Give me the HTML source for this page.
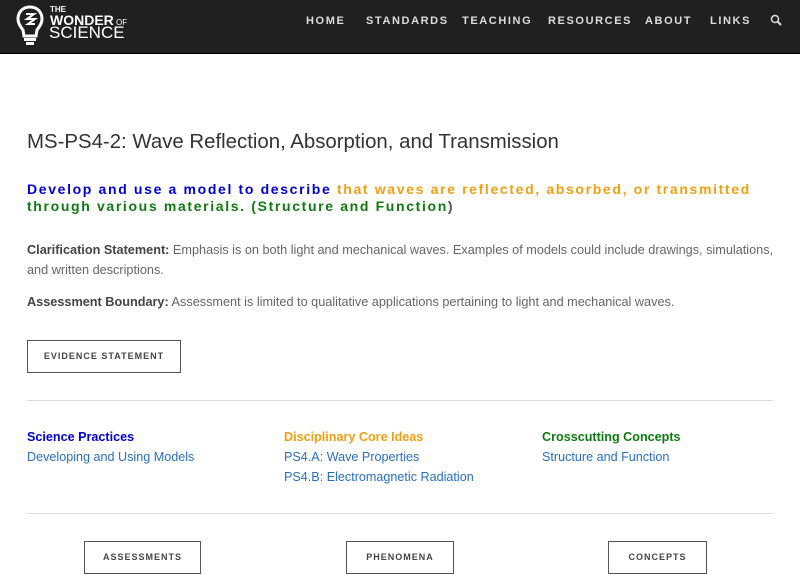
<!DOCTYPE html>
<html><head><meta charset="utf-8"><style>
*{margin:0;padding:0;box-sizing:border-box}
body{width:800px;height:575px;overflow:hidden;background:#fff;font-family:"Liberation Sans",sans-serif;color:#555;position:relative}
.hdr{position:absolute;left:0;top:0;width:800px;height:54px;background:#202020;border-bottom:1px solid #000}
.nav{position:absolute;top:15px;font-size:11px;font-weight:bold;letter-spacing:1.6px;color:#ddd}
.abs{position:absolute;white-space:nowrap}
h1{position:absolute;left:27px;top:131px;font-size:20.4px;font-weight:normal;color:#333}
.sub{position:absolute;left:27px;top:181px;font-size:14px;font-weight:bold;letter-spacing:1.65px;line-height:17px;white-space:nowrap}
.b{color:#0000d8}.o{color:#f0a010}.g{color:#107a10}
.p{position:absolute;left:27px;font-size:12.7px;line-height:20px;color:#666;width:750px}
.p b{color:#444}
.btn{position:absolute;border:1.5px solid #555;font-size:9px;font-weight:bold;letter-spacing:1px;color:#444;text-align:center;height:33px;line-height:30px}
hr{position:absolute;left:27px;width:746px;border:0;border-top:1px solid #ddd}
.h{position:absolute;font-size:12.6px;font-weight:bold}
.l{position:absolute;font-size:12.6px;color:#2a6fc0}
</style></head><body>
<div class="hdr">
<svg style="position:absolute;left:15px;top:4px" width="30" height="44" viewBox="0 0 30 44"><path d="M15 3C7 3 3 9 3 15c0 5 3 8 5 11l1 6h12l1-6c2-3 5-6 5-11 0-6-4-12-12-12z" fill="none" stroke="#fff" stroke-width="3"/><path d="M11 10h8l-7 5h8l-7 5h7" fill="none" stroke="#fff" stroke-width="2"/><rect x="9" y="34" width="12" height="3" fill="#fff"/><rect x="11" y="38" width="8" height="3" fill="#fff"/></svg>
<div class="abs" style="left:50px;top:5px;font-size:8px;font-weight:bold;color:#fff">THE</div>
<div class="abs" style="left:50px;top:12px;font-size:14px;font-weight:bold;color:#fff">WONDER<span style="font-size:8px;font-weight:normal"> OF</span></div>
<div class="abs" style="left:49px;top:23px;font-size:17px;color:#fff">SCIENCE</div>
<div class="nav" style="left:306px">HOME</div>
<div class="nav" style="left:366px">STANDARDS</div>
<div class="nav" style="left:462px">TEACHING</div>
<div class="nav" style="left:548px">RESOURCES</div>
<div class="nav" style="left:645px">ABOUT</div>
<div class="nav" style="left:710px">LINKS</div>
<svg style="position:absolute;left:770px;top:14px" width="12" height="12"><circle cx="5" cy="5" r="3.5" fill="none" stroke="#ddd" stroke-width="1.5"/><path d="M7.5 7.5L11 11" stroke="#ddd" stroke-width="2"/></svg>
</div>
<h1>MS-PS4-2: Wave Reflection, Absorption, and Transmission</h1>
<div class="sub"><span class="b">Develop and use a model to describe</span> <span class="o">that waves are reflected, absorbed, or transmitted</span><br><span class="g">through various materials.</span> <span class="g">(Structure and Function</span>)</div>
<div class="p" style="top:240px"><b>Clarification Statement:</b> Emphasis is on both light and mechanical waves. Examples of models could include drawings, simulations, and written descriptions.</div>
<div class="p" style="top:292px"><b>Assessment Boundary:</b> Assessment is limited to qualitative applications pertaining to light and mechanical waves.</div>
<div class="btn" style="left:27px;top:340px;width:154px">EVIDENCE STATEMENT</div>
<hr style="top:400px">
<div class="h b" style="left:27px;top:430px">Science Practices</div>
<div class="l" style="left:27px;top:450px">Developing and Using Models</div>
<div class="h o" style="left:284px;top:430px">Disciplinary Core Ideas</div>
<div class="l" style="left:284px;top:450px">PS4.A: Wave Properties</div>
<div class="l" style="left:284px;top:470px">PS4.B: Electromagnetic Radiation</div>
<div class="h g" style="left:542px;top:430px">Crosscutting Concepts</div>
<div class="l" style="left:542px;top:450px">Structure and Function</div>
<hr style="top:513px">
<div class="btn" style="left:84px;top:541px;width:117px">ASSESSMENTS</div>
<div class="btn" style="left:346px;top:541px;width:108px">PHENOMENA</div>
<div class="btn" style="left:608px;top:541px;width:99px">CONCEPTS</div>
</body></html>
